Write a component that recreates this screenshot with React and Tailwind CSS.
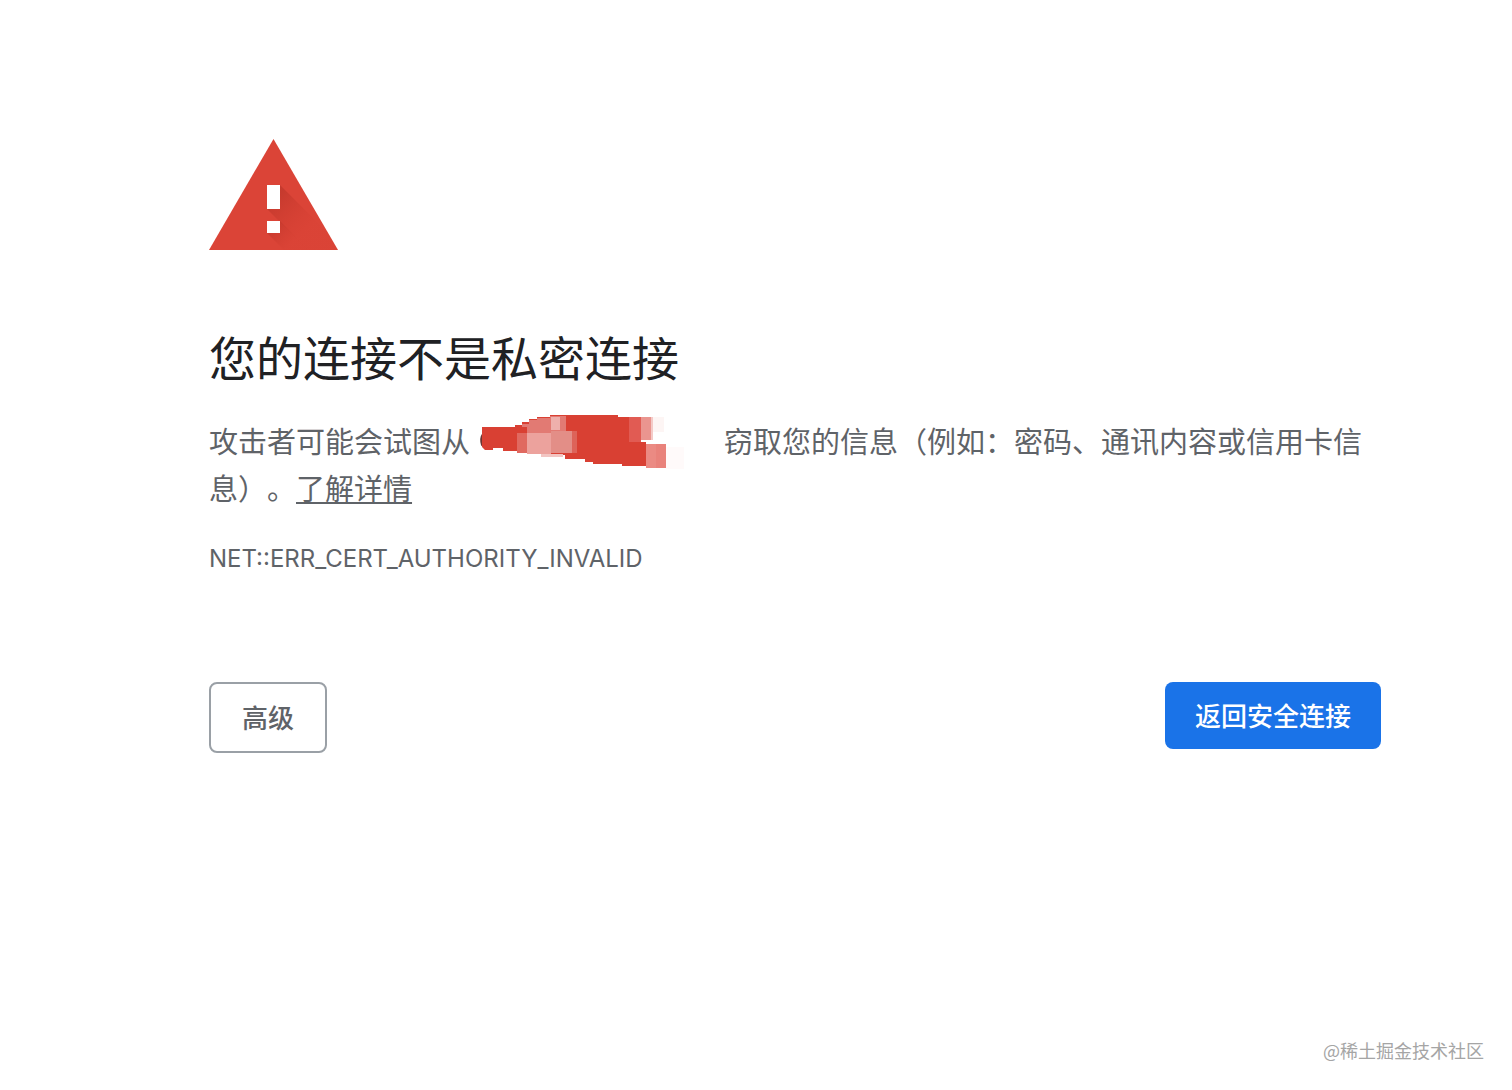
function WarningIcon() {
  return (
    <svg viewBox="0 0 129 111" className="block h-[111px] w-[129px]" aria-hidden="true">
      <defs>
        <linearGradient id="shade" gradientUnits="userSpaceOnUse" x1="66" y1="60" x2="98" y2="92">
          <stop offset="0" stopColor="#b93428" stopOpacity="0.6" />
          <stop offset="1" stopColor="#d53d30" stopOpacity="0.1" />
        </linearGradient>
        <linearGradient id="shade-dot" gradientUnits="userSpaceOnUse" x1="62" y1="86" x2="82" y2="106">
          <stop offset="0" stopColor="#b93428" stopOpacity="0.7" />
          <stop offset="1" stopColor="#d53d30" stopOpacity="0.1" />
        </linearGradient>
        <clipPath id="triangle">
          <path d="M64.5 0 129 111H0Z" />
        </clipPath>
      </defs>
      <path d="M64.5 0 129 111H0Z" fill="#db4437" />
      <g clipPath="url(#triangle)">
        <path d="M71 46 129 104V111H99L58 70H71Z" fill="url(#shade)" />
        <path d="M71 82 100 111H75L58 94H71Z" fill="url(#shade-dot)" />
      </g>
      <path d="M58 46H71V70H58ZM58 82H71V94H58Z" fill="#fff" />
    </svg>
  );
}

function RedactedHost() {
  return (
    <svg
      viewBox="-3 0 254 64"
      className="-my-4 inline-block h-[64px] w-[254px] align-middle"
      role="img"
      aria-label="已遮盖的网址"
    >
      <path d="M10 21Q7 25 9 32Q12 36 20 34" fill="none" stroke="#6b3533" strokeWidth="2" />
      <path
        d="M9 14H42V12H49V9H56V6H64V4H77V2H145V4H156V29H173V53H149V51H120V49H112V46H92V42H71V40H44V38H30V35H20V37H12L9 34Z"
        fill="#d94033"
      />
      <g transform="translate(-2 -1)">
        <path d="M58 8H66V6H79V4H95V19H83V21H56V15H51V12H58Z" fill="#e27a73" />
        <path d="M80 5H89V18H80Z" fill="#eeb0ac" />
        <path d="M46 21H56V41H46Z" fill="#e06960" />
        <path d="M56 21H80V42H56Z" fill="#eca29d" />
        <path d="M80 19H101V41H80Z" fill="#e38e87" />
        <path d="M101 19H106V41H101Z" fill="#dd6359" />
        <path d="M70 42H92V45H70Z" fill="#f2c5c2" />
        <path d="M158 5H170V30H158Z" fill="#e15b53" />
        <path d="M170 5H180V28H170Z" fill="#ea958f" />
        <path d="M180 5H182V28H180Z" fill="#f4cac7" />
        <path d="M182 5H193V20H182Z" fill="#fdf5f4" />
        <path d="M175 32H185V56H175Z" fill="#eb8a83" />
        <path d="M185 32H195V56H185Z" fill="#e9827b" />
        <path d="M195 35H213V57H195Z" fill="#fffafa" />
      </g>
    </svg>
  );
}

export default function App() {
  return (
    <div className="flex min-h-screen flex-col bg-white font-['Noto_Sans_CJK_SC',sans-serif] text-[#5f6368] [text-spacing-trim:space-all]">
      <main className="pt-[139px] pr-[131px] pl-[209px]">
        <WarningIcon />
        <h1 className="mt-[78px] text-[47px] leading-[56px] font-normal text-[#202124]">
          您的连接不是私密连接
        </h1>
        <p className="mt-[33px] text-[29px] leading-[47px]">
          攻击者可能会试图从
          <RedactedHost />
          窃取您的信息（例如：密码、通讯内容或信用卡信息）。
          <a
            href="#details"
            className="underline decoration-2 underline-offset-2 [text-decoration-skip-ink:none]"
          >
            了解详情
          </a>
        </p>
        <p className="mt-8 font-['Inter',sans-serif] text-[24px] leading-[32px]">
          NET::ERR_CERT_AUTHORITY_INVALID
        </p>
        <div className="mt-[107px] flex items-start justify-between text-[26px] leading-[35px] font-medium">
          <button
            type="button"
            className="rounded-lg border-2 border-[#9aa0a6] px-[31px] pt-[15px] pb-[17px]"
          >
            高级
          </button>
          <button
            type="button"
            className="rounded-lg bg-[#1a73e8] px-[30px] pt-[15px] pb-[17px] text-white"
          >
            返回安全连接
          </button>
        </div>
      </main>
      <footer className="mt-auto px-7 pb-[26px] text-right text-[18px] leading-[28px] text-[#a5a5a5]">
        @稀土掘金技术社区
      </footer>
    </div>
  );
}
